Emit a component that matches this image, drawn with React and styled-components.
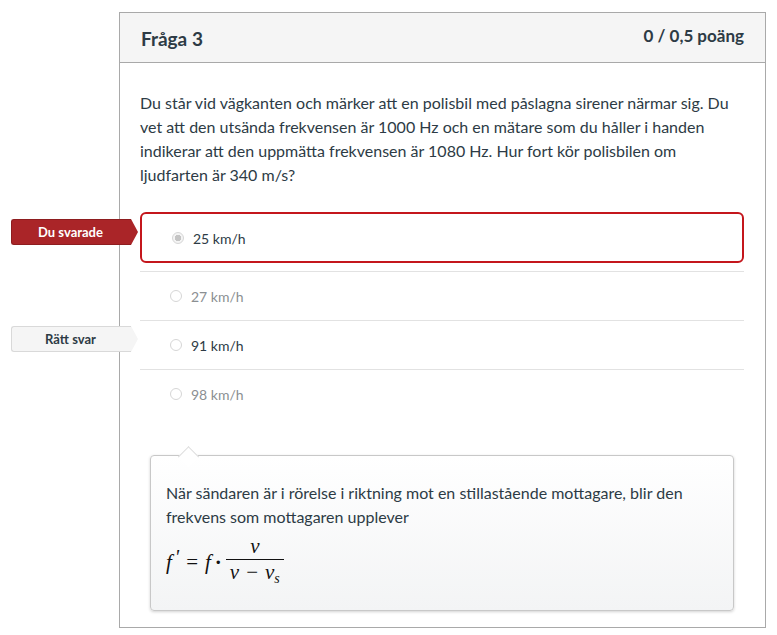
import React from "react";
import styled, { createGlobalStyle } from "styled-components";

const GlobalStyle = createGlobalStyle`
  body {
    margin: 0;
    background: #fff;
    font-family: Lato, "Open Sans", sans-serif;
    color: #2d3b45;
  }
`;

const answers = [
  { text: "25 km/h", picked: true, label: "Du svarade", tone: "wrong" },
  { text: "27 km/h", muted: true },
  { text: "91 km/h", label: "Rätt svar", tone: "right" },
  { text: "98 km/h", muted: true },
];

export default function App() {
  return (
    <>
      <GlobalStyle />
      <Page>
        <Card>
          <Header>
            <Title>Fråga 3</Title>
            <Points>0 / 0,5 poäng</Points>
          </Header>
          <Body>
            <Question>
              Du står vid vägkanten och märker att en polisbil med påslagna sirener närmar sig. Du
              vet att den utsända frekvensen är 1000 Hz och en mätare som du håller i handen
              indikerar att den uppmätta frekvensen är 1080 Hz. Hur fort kör polisbilen om
              ljudfarten är 340 m/s?
            </Question>
            <AnswerList>
              {answers.map((a, i) => (
                <AnswerRow key={i} picked={a.picked}>
                  {a.label && <Tag tone={a.tone}>{a.label}</Tag>}
                  <Option picked={a.picked} muted={a.muted}>
                    <Radio checked={a.picked} />
                    {a.text}
                  </Option>
                </AnswerRow>
              ))}
            </AnswerList>
            <Comment>
              <CommentText>
                När sändaren är i rörelse i riktning mot en stillastående mottagare, blir den
                frekvens som mottagaren upplever
              </CommentText>
              <Formula>
                <I>f</I>
                <Prime>'</Prime>
                <Op>=</Op>
                <I>f</I>
                <Dot>·</Dot>
                <Frac>
                  <Num>
                    <I>v</I>
                  </Num>
                  <Den>
                    <I>v</I>
                    <Op small>−</Op>
                    <I>v</I>
                    <Sub>s</Sub>
                  </Den>
                </Frac>
              </Formula>
            </Comment>
          </Body>
        </Card>
      </Page>
    </>
  );
}

const Page = styled.div`
  padding: 12px 0 0 119px;
`;

const Card = styled.div`
  width: 645px;
  border: 1px solid #a9a9a9;
`;

const Header = styled.div`
  display: flex;
  align-items: center;
  justify-content: space-between;
  height: 49px;
  padding: 0 21px;
  background: #f5f5f5;
  border-bottom: 1px solid #a9a9a9;
`;

const Title = styled.div`
  font-size: 19px;
  font-weight: 700;
  padding-top: 2px;
`;

const Points = styled.div`
  font-size: 17px;
  font-weight: 700;
  margin-top: -4px;
`;

const Body = styled.div`
  padding: 28px 21px 16px 20px;
`;

const Question = styled.p`
  margin: 0;
  font-size: 16px;
  line-height: 24px;
`;

const AnswerList = styled.div`
  margin-top: 25px;
`;

const AnswerRow = styled.div`
  position: relative;
  padding-bottom: ${(p) => (p.picked ? "8px" : "0")};
  border-bottom: 1px solid #e2e2e2;
  &:last-child {
    border-bottom: none;
  }
`;

const Option = styled.div`
  display: flex;
  align-items: center;
  gap: 9px;
  height: ${(p) => (p.picked ? "46px" : "48px")};
  padding-left: 30px;
  font-size: 14px;
  color: ${(p) => (p.muted ? "#8b8f92" : "#2d3b45")};
  border: ${(p) => (p.picked ? "2px solid #c4161c" : "none")};
  border-radius: 6px;
  padding-top: ${(p) => (p.picked ? "1px" : "0")};
  box-sizing: content-box;
`;

const Radio = styled.span`
  width: 10px;
  height: 10px;
  border-radius: 50%;
  border: 1px solid #d6d6d6;
  background: ${(p) => (p.checked ? "radial-gradient(circle, #c4c4c4 0 3px, #f4f4f4 3.5px)" : "#fff")};
  flex: none;
`;

const Tag = styled.div`
  position: absolute;
  z-index: 2;
  left: -129px;
  top: ${(p) => (p.tone === "wrong" ? "7px" : "5px")};
  width: 120px;
  height: 26px;
  box-sizing: border-box;
  display: flex;
  align-items: center;
  justify-content: center;
  padding-right: 2px;
  font-size: 13px;
  font-weight: 700;
  color: ${(p) => (p.tone === "wrong" ? "#fff" : "#2d3b45")};
  background: ${(p) => (p.tone === "wrong" ? "#aa2528" : "#f5f5f5")};
  border: 1px solid ${(p) => (p.tone === "wrong" ? "#8e1d1f" : "#d9d9d9")};
  border-right: none;
  border-radius: 3px 0 0 3px;
  &::after {
    content: "";
    position: absolute;
    right: -7px;
    top: -1px;
    width: 0;
    height: 0;
    border-top: 13px solid transparent;
    border-bottom: 13px solid transparent;
    border-left: 7px solid ${(p) => (p.tone === "wrong" ? "#aa2528" : "#f5f5f5")};
  }
`;

const Comment = styled.div`
  position: relative;
  margin: 37px 10px 0 10px;
  padding: 25px 15px 20px 15px;
  border: 1px solid #c8c8c8;
  border-radius: 4px;
  background: linear-gradient(#ffffff, #f3f4f5);
  box-shadow: 0 1px 3px rgba(0, 0, 0, 0.18);
  &::before {
    content: "";
    position: absolute;
    top: -11px;
    left: 30px;
    width: 14px;
    height: 14px;
    background: #fff;
    border-top: 1px solid #dcdcdc;
    border-left: 1px solid #dcdcdc;
    transform: rotate(45deg) translate(3px, 3px);
  }
`;

const CommentText = styled.p`
  margin: 0;
  font-size: 16px;
  line-height: 24px;
`;

const Formula = styled.div`
  display: flex;
  align-items: center;
  margin-top: 6px;
  font-family: "Liberation Serif", "DejaVu Serif", serif;
  font-size: 21px;
  color: #111;
`;

const I = styled.span`
  font-style: italic;
`;

const Prime = styled.span`
  font-size: 20px;
  font-style: italic;
  position: relative;
  top: -5px;
  margin-left: 3px;
`;

const Op = styled.span`
  margin: 0 7px;
`;

const Dot = styled.span`
  margin: 0 4px;
  font-weight: 700;
`;

const Frac = styled.span`
  display: inline-flex;
  flex-direction: column;
  align-items: center;
`;

const Num = styled.span`
  padding: 0 4px 2px;
  line-height: 22px;
`;

const Den = styled.span`
  padding: 1px 4px 0;
  border-top: 1px solid #111;
  line-height: 22px;
`;

const Sub = styled.sub`
  font-size: 14px;
  font-style: italic;
  vertical-align: -4px;
`;
